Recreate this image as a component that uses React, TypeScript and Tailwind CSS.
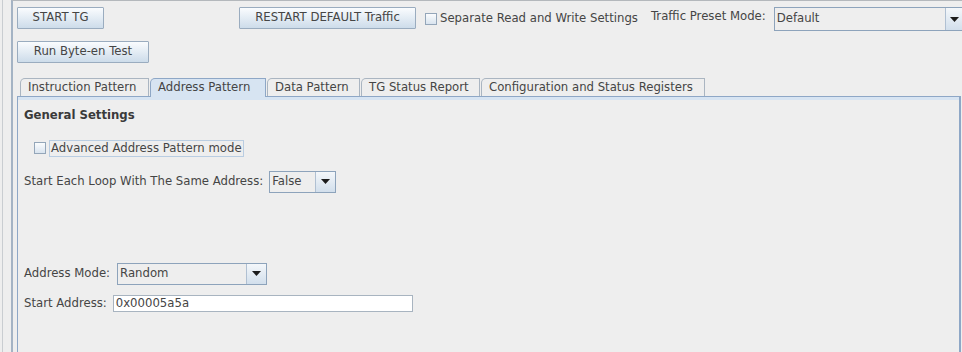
import React from 'react';

const font = { fontFamily: '"DejaVu Sans", "Liberation Sans", sans-serif' };

// Swing "Ocean" style push button
const SwingButton: React.FC<{ label: string; width: string }> = ({ label, width }) => (
  <div
    className={`${width} shrink-0 h-[22px] flex items-center justify-center whitespace-nowrap border border-[#9aacbf] bg-gradient-to-b from-[#fafcfe] to-[#cddcea] text-[11.7px] text-[#454545] rounded-[1px]`}
  >
    {label}
  </div>
);

const Arrow: React.FC = () => (
  <svg width="9" height="5" viewBox="0 0 9 5">
    <path d="M0 0 H9 L4.5 5 Z" fill="#1c1c1c" />
  </svg>
);

const Combo: React.FC<{ value: string; width: string; height?: string; arrowW?: string }> = ({
  value,
  width,
  height = 'h-[22px]',
  arrowW = 'w-[19px]',
}) => (
  <div className={`${width} ${height} shrink-0 flex border border-[#8da3bb] bg-[#eeeeee]`}>
    <div className="flex-1 flex items-center pl-[2px] whitespace-nowrap border-r border-[#b0c0d2]">
      {value}
    </div>
    <div className={`${arrowW} flex items-center justify-center bg-gradient-to-b from-[#f4f7fa] to-[#d2dfec]`}>
      <Arrow />
    </div>
  </div>
);

const CheckBox: React.FC = () => (
  <div className="w-[12px] h-[12px] shrink-0 border border-[#94a6b9] bg-gradient-to-b from-[#fbfcfd] to-[#d9e4ef]" />
);

const tabs = [
  { label: 'Instruction Pattern', w: 'w-[129px]' },
  { label: 'Address Pattern', w: 'w-[116px]', selected: true },
  { label: 'Data Pattern', w: 'w-[93px]' },
  { label: 'TG Status Report', w: 'w-[119px]' },
  { label: 'Configuration and Status Registers', w: 'w-[224px]' },
];

export default function App() {
  return (
    <div className="w-[962px] h-[352px] overflow-hidden bg-[#eeeeee] flex text-[11.7px] text-[#454545]" style={font}>
      {/* outer frame edges */}
      <div className="w-[2px] shrink-0" />
      <div className="w-[9px] shrink-0 border-l border-[#c9cdd1]" />

      <div className="flex-1 min-w-0 flex flex-col border-l-2 border-t border-l-[#a4b3c4] border-t-[#b4b8bc] pt-[6px] pl-[4px]">
        {/* top row */}
        <div className="flex items-start h-[24px] whitespace-nowrap">
          <SwingButton label="START TG" width="w-[87px]" />
          <div className="ml-[135px] shrink-0">
            <SwingButton label="RESTART DEFAULT Traffic" width="w-[177px]" />
          </div>
          <div className="ml-[9px] mt-[3px] shrink-0 flex items-center gap-[3px]">
            <CheckBox />
            <span>Separate Read and Write Settings</span>
          </div>
          <span className="ml-[13px] mt-[1px] shrink-0">Traffic Preset Mode:</span>
          <div className="ml-[8px] shrink-0">
            <Combo value="Default" width="w-[190px]" height="h-[24px]" arrowW="w-[17px]" />
          </div>
        </div>

        {/* second row */}
        <div className="mt-[10px]">
          <SwingButton label="Run Byte-en Test" width="w-[132px]" />
        </div>

        {/* tabs */}
        <div className="mt-[15px] flex items-end h-[18px] pl-[3px] whitespace-nowrap">
          {tabs.map((t) => (
            <div
              key={t.label}
              className={
                t.selected
                  ? `${t.w} shrink-0 h-[19px] -mb-[1px] mr-[1px] rounded-tl-[5px] border border-b-0 border-[#8ea7c6] bg-[#d7e4f2] pl-[7px] leading-[17px] relative z-10`
                  : `${t.w} shrink-0 h-[18px] mr-[1px] rounded-tl-[5px] border border-b-0 border-[#aab5c1] pl-[7px] leading-[17px]`
              }
            >
              {t.label}
            </div>
          ))}
        </div>

        {/* tab content */}
        <div className="flex-1 w-[944px] border-l border-t border-r-2 border-[#8ea7c6] flex flex-col">
          <div className="h-[3px] bg-[#d7e4f2]" />
          <div className="pl-[6px] flex flex-col whitespace-nowrap">
            <div className="mt-[7px] font-bold text-[#3a3a3a]">General Settings</div>

            <div className="mt-[15px] ml-[10px] flex items-center gap-[3px]">
              <CheckBox />
              <span className="border border-[#b9cde2] px-[1px] h-[17px] leading-[15px]">
                Advanced Address Pattern mode
              </span>
            </div>

            <div className="mt-[14px] flex items-center">
              <span>Start Each Loop With The Same Address:</span>
              <div className="ml-[6px]">
                <Combo value="False" width="w-[67px]" />
              </div>
            </div>

            <div className="mt-[70px] flex items-center">
              <span>Address Mode:</span>
              <div className="ml-[7px]">
                <Combo value="Random" width="w-[150px]" />
              </div>
            </div>

            <div className="mt-[10px] flex items-center">
              <span>Start Address:</span>
              <div className="ml-[6px] w-[300px] h-[17px] border border-[#a8b4c0] bg-white pl-[2px] leading-[15px]">
                0x00005a5a
              </div>
            </div>
          </div>
        </div>
      </div>
    </div>
  );
}
